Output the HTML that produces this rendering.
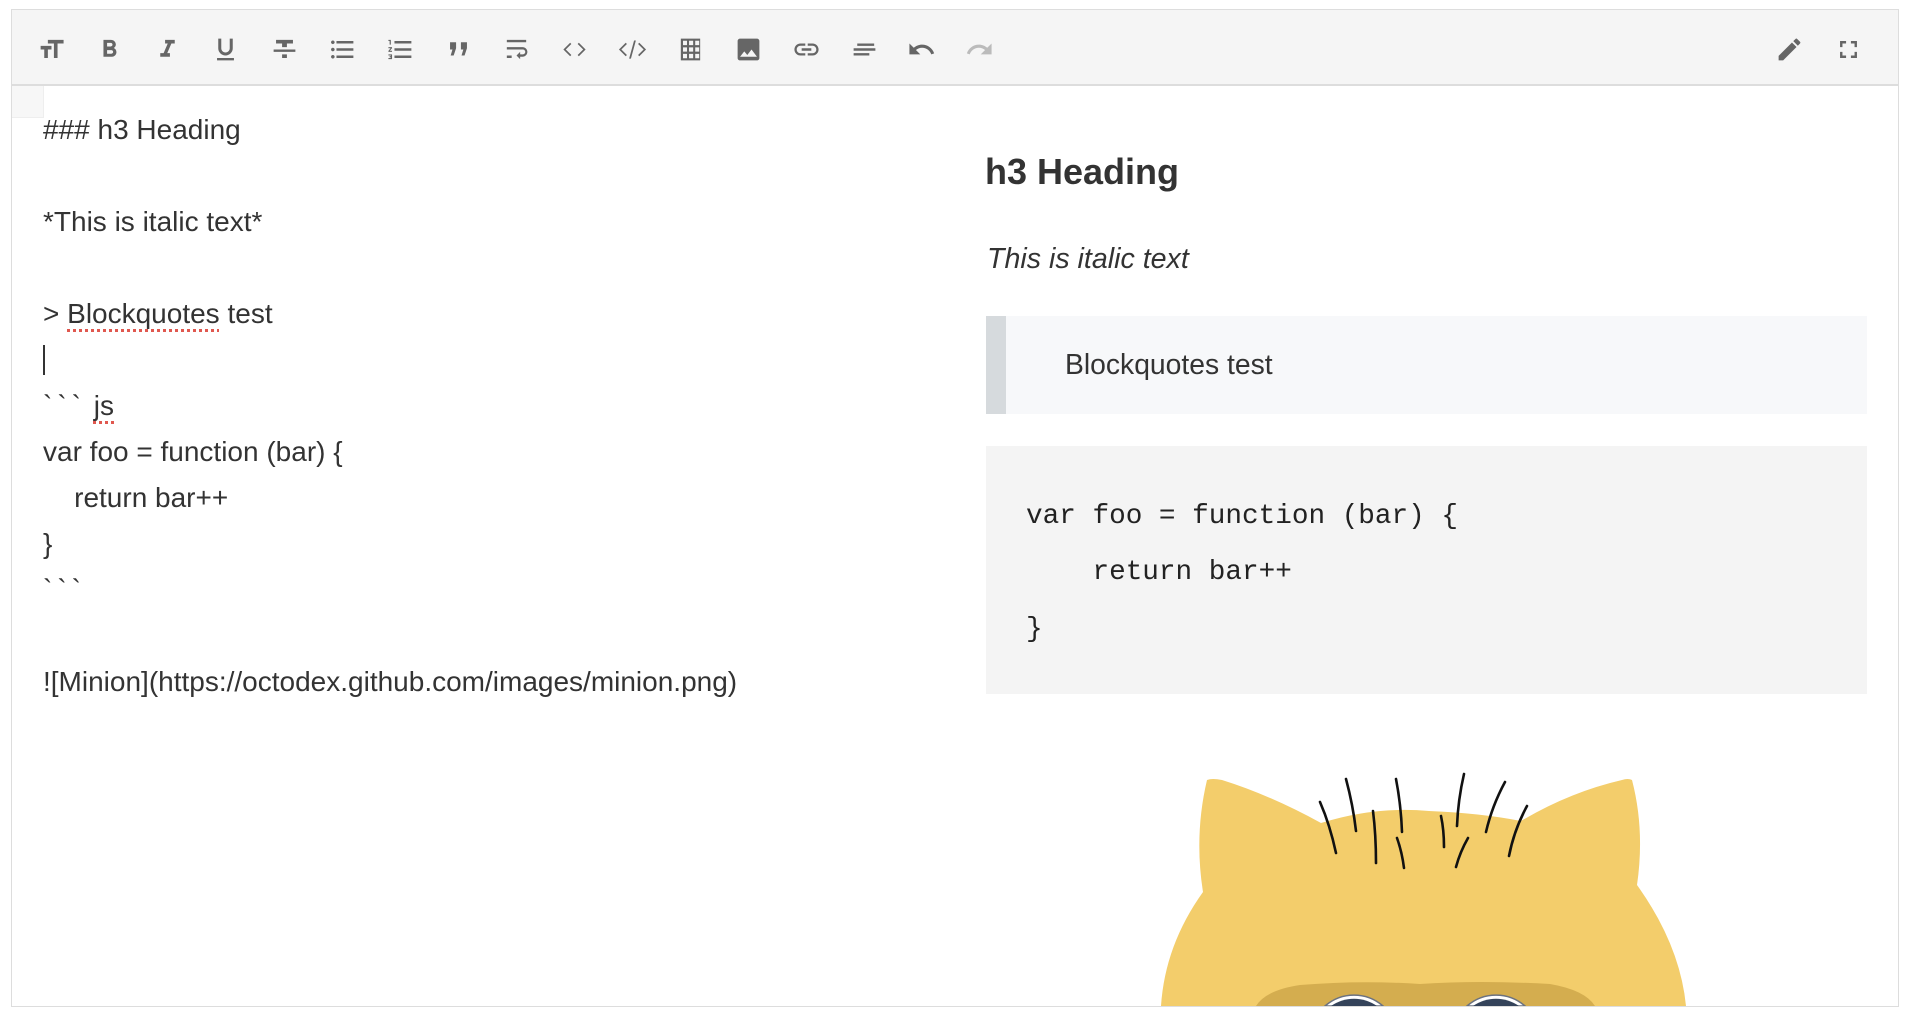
<!DOCTYPE html>
<html><head><meta charset="utf-8"><style>
html,body{margin:0;padding:0;background:#fff;width:1910px;height:1018px;overflow:hidden;position:relative;font-family:"Liberation Sans",Arial,sans-serif;color:#333}
.frame{position:absolute;left:11px;top:9px;width:1886px;height:996px;border:1px solid #ddd;box-sizing:content-box}
.tb{position:absolute;left:12px;top:10px;width:1886px;height:74px;background:#f5f5f5;border-bottom:2px solid #ddd}
.ic{position:absolute;top:35px;width:29px;height:29px}
.ic svg{width:29px;height:29px;fill:#666}
.gut{position:absolute;left:12px;top:86px;width:31px;height:31px;background:#f7f7f7;border-right:1px solid #eee;border-bottom:1px solid #eee}
.ln{position:absolute;left:43px;height:46px;line-height:46px;font-size:28px;white-space:pre;color:#333}
.bt{letter-spacing:5px}
.sp{text-decoration:underline dotted #e0584f;text-decoration-thickness:3px;text-underline-offset:6px}
.cur{position:absolute;left:43px;top:345px;width:2px;height:30px;background:#333}
h3{position:absolute;left:985px;top:148px;margin:0;font-size:36px;font-weight:bold;line-height:48px;color:#333}
.it{position:absolute;left:987px;top:236px;font-size:28.6px;font-style:italic;line-height:46px}
.bq{position:absolute;left:986px;top:316px;width:881px;height:98px;background:#f7f8fa}
.bq .bar{position:absolute;left:0;top:0;width:20px;height:98px;background:#d6dadd}
.bq .t{position:absolute;left:79px;top:25px;font-size:28.3px;line-height:46px}
.code{position:absolute;left:986px;top:446px;width:881px;height:248px;background:#f4f4f4}
.code div{position:absolute;left:40px;font-family:"Liberation Mono","Courier New",monospace;font-size:27.7px;line-height:40px;white-space:pre;color:#222}
</style></head><body>
<div class="frame"></div>
<div class="tb"></div>

<div class="ic" style="left:37px"><svg viewBox="0 0 24 24"><path d="M9 4v3h5v12h3V7h5V4H9zm-6 8h3v7h3v-7h3V9H3v3z"/></svg></div>
<div class="ic" style="left:95px"><svg viewBox="0 0 24 24"><path d="M15.6 10.79c.97-.67 1.65-1.77 1.65-2.79 0-2.26-1.75-4-4-4H7v14h7.04c2.09 0 3.71-1.7 3.71-3.79 0-1.52-.86-2.82-2.15-3.42zM10 6.5h3c.83 0 1.5.67 1.5 1.5s-.67 1.5-1.5 1.5h-3v-3zm3.5 9H10v-3h3.5c.83 0 1.5.67 1.5 1.5s-.67 1.5-1.5 1.5z"/></svg></div>
<div class="ic" style="left:153px"><svg viewBox="0 0 24 24"><path d="M10 4v3h2.21l-3.42 8H6v3h8v-3h-2.21l3.42-8H18V4z"/></svg></div>
<div class="ic" style="left:211px"><svg viewBox="0 0 24 24"><path d="M12 17c3.31 0 6-2.69 6-6V3h-2.5v8c0 1.93-1.57 3.5-3.5 3.5S8.5 12.93 8.5 11V3H6v8c0 3.31 2.69 6 6 6zm-7 2v2h14v-2H5z"/></svg></div>
<div class="ic" style="left:270px"><svg viewBox="0 0 24 24"><path d="M10 19h4v-3h-4v3zM5 4v3h5v3h4V7h5V4H5zM3 14h18v-2H3v2z"/></svg></div>
<div class="ic" style="left:328px"><svg viewBox="0 0 24 24"><path d="M4 10.5c-.83 0-1.5.67-1.5 1.5s.67 1.5 1.5 1.5 1.5-.67 1.5-1.5-.67-1.5-1.5-1.5zm0-6c-.83 0-1.5.67-1.5 1.5S3.17 7.5 4 7.5 5.5 6.83 5.5 6 4.83 4.5 4 4.5zm0 12c-.83 0-1.5.68-1.5 1.5s.68 1.5 1.5 1.5 1.5-.68 1.5-1.5-.67-1.5-1.5-1.5zM7 19h14v-2H7v2zm0-6h14v-2H7v2zm0-8v2h14V5H7z"/></svg></div>
<div class="ic" style="left:386px"><svg viewBox="0 0 24 24"><path d="M2 17h2v.5H3v1h1v.5H2v1h3v-4H2v1zm1-9h1V4H2v1h1v3zm-1 3h1.8L2 13.1v.9h3v-1H3.2L5 10.9V10H2v1zm5-6v2h14V5H7zm0 14h14v-2H7v2zm0-6h14v-2H7v2z"/></svg></div>
<div class="ic" style="left:444px"><svg viewBox="0 0 24 24"><path d="M5 6h5v5l-2 6H5.5l1.5-5H5zM14 6h5v5l-2 6h-2.5l1.5-5h-2z"/></svg></div>
<div class="ic" style="left:502px"><svg viewBox="0 0 24 24"><path d="M4 19h4v-2H4v2zM20 4H4v2h16V4zm-3 6H4v2h13.25c1.1 0 2 .9 2 2s-.9 2-2 2H15v-2l-3 3 3 3v-2h2c2.21 0 4-1.79 4-4s-1.79-4-4-4z"/></svg></div>
<div class="ic" style="left:560px"><svg viewBox="0 0 24 24"><path d="M9.4 16.6L4.8 12l4.6-4.6L8.4 6.4 2.8 12l5.6 5.6zm5.2 0l4.6-4.6-4.6-4.6 1-1 5.6 5.6-5.6 5.6z"/></svg></div>
<div class="ic" style="left:618px"><svg viewBox="0 0 24 24"><path d="M7.4 16.6L2.8 12l4.6-4.6L6.4 6.4 0.8 12l5.6 5.6zm9.2 0l4.6-4.6-4.6-4.6 1-1 5.6 5.6-5.6 5.6zM13.3 4.5h1.5L10.7 19.5H9.2z"/></svg></div>
<div class="ic" style="left:676px"><svg viewBox="0 0 24 24"><path d="M4 3h16v18H4zm1.8 1.8v3.6h3.3V4.8zm5 0v3.6h3.4V4.8zm5.1 0v3.6h3.3V4.8zM5.8 10.2v3.6h3.3v-3.6zm5 0v3.6h3.4v-3.6zm5.1 0v3.6h3.3v-3.6zM5.8 15.6v3.6h3.3v-3.6zm5 0v3.6h3.4v-3.6zm5.1 0v3.6h3.3v-3.6z" fill-rule="evenodd"/></svg></div>
<div class="ic" style="left:734px"><svg viewBox="0 0 24 24"><path d="M21 19V5c0-1.1-.9-2-2-2H5c-1.1 0-2 .9-2 2v14c0 1.1.9 2 2 2h14c1.1 0 2-.9 2-2zM8.5 13.5l2.5 3.01L14.5 12l4.5 6H5l3.5-4.5z"/></svg></div>
<div class="ic" style="left:792px"><svg viewBox="0 0 24 24"><path d="M3.9 12c0-1.71 1.39-3.1 3.1-3.1h4V7H7c-2.76 0-5 2.24-5 5s2.24 5 5 5h4v-1.9H7c-1.71 0-3.1-1.39-3.1-3.1zM8 13h8v-2H8v2zm9-6h-4v1.9h4c1.71 0 3.1 1.39 3.1 3.1s-1.39 3.1-3.1 3.1h-4V17h4c2.76 0 5-2.24 5-5s-2.24-5-5-5z"/></svg></div>
<div class="ic" style="left:850px"><svg viewBox="0 0 24 24"><path d="M6 7h14v2H6zM3 11h18v2H3zM3 15h13v2H3z"/></svg></div>
<div class="ic" style="left:907px"><svg viewBox="0 0 24 24"><path d="M12.5 8c-2.65 0-5.05.99-6.9 2.6L2 7v9h9l-3.62-3.62c1.39-1.16 3.16-1.88 5.12-1.88 3.54 0 6.55 2.31 7.6 5.5l2.37-.78C21.08 11.03 17.15 8 12.5 8z"/></svg></div>
<div class="ic" style="left:965px"><svg viewBox="0 0 24 24" style="fill:#bbb"><path d="M18.4 10.6C16.55 8.99 14.15 8 11.5 8c-4.65 0-8.58 3.03-9.96 7.22L3.9 16c1.05-3.19 4.05-5.5 7.6-5.5 1.95 0 3.73.72 5.12 1.88L13 16h9V7l-3.6 3.6z"/></svg></div>
<div class="ic" style="left:1775px"><svg viewBox="0 0 24 24"><path d="M3 17.25V21h3.75L17.81 9.94l-3.75-3.75L3 17.25zM20.71 7.04a1 1 0 000-1.41l-2.34-2.34a1 1 0 00-1.41 0l-1.83 1.83 3.75 3.75 1.83-1.83z"/></svg></div>
<div class="ic" style="left:1834px"><svg viewBox="0 0 24 24"><path d="M7 14H5v5h5v-2H7v-3zm-2-4h2V7h3V5H5v5zm12 7h-3v2h5v-5h-2v3zM14 5v2h3v3h2V5h-5z"/></svg></div>

<div class="gut"></div>
<div class="ln" style="top:107px">### h3 Heading</div>
<div class="ln" style="top:199px">*This is italic text*</div>
<div class="ln" style="top:291px">&gt; <span class="sp">Blockquotes</span> test</div>
<div class="cur"></div>
<div class="ln" style="top:383px"><span class="bt">&#96;&#96;&#96;</span> <span class="sp">js</span></div>
<div class="ln" style="top:429px">var foo = function (bar) {</div>
<div class="ln" style="top:475px">    return bar++</div>
<div class="ln" style="top:521px">}</div>
<div class="ln" style="top:567px"><span class="bt">&#96;&#96;&#96;</span></div>
<div class="ln" style="top:659px">![Minion](https://octodex.github.com/images/minion.png)</div>

<h3>h3 Heading</h3>
<div class="it">This is italic text</div>
<div class="bq"><div class="bar"></div><div class="t">Blockquotes test</div></div>
<div class="code">
<div style="top:51px">var foo = function (bar) {</div>
<div style="top:107px">    return bar++</div>
<div style="top:164px">}</div>
</div>

<svg style="position:absolute;left:0;top:0" width="1910" height="1006" viewBox="0 0 1910 1006">
<path d="M1207 780 Q1212 778 1222 780 Q1270 795 1321 823 Q1375 806 1429 811 Q1480 813 1521 821 Q1570 792 1622 780 Q1628 778 1632 780 Q1645 830 1637 885 Q1680 945 1686 1006 L1161 1006 Q1165 945 1203 892 Q1194 835 1207 780 Z" fill="#f3cd6b"/>
<path d="M1256 1006 Q1266 990 1300 985 Q1360 980 1420 984 Q1480 980 1550 984 Q1585 990 1595 1006 Z" fill="#d4ad4f"/>
<path d="M1325 1006 A44 44 0 0 1 1383 1006 Z" fill="#fff" stroke="#6b7280" stroke-width="1.5"/>
<path d="M1331 1006 A40 40 0 0 1 1377 1006 Z" fill="#34435a"/>
<path d="M1467 1006 A44 44 0 0 1 1525 1006 Z" fill="#fff" stroke="#6b7280" stroke-width="1.5"/>
<path d="M1473 1006 A40 40 0 0 1 1519 1006 Z" fill="#34435a"/>
<g stroke="#111" stroke-width="2.6" stroke-linecap="round" fill="none">
<path d="M1320 802 Q1330 825 1336 853"/>
<path d="M1346 779 Q1353 805 1356 831"/>
<path d="M1373 811 Q1376 835 1376 863"/>
<path d="M1396 779 Q1401 805 1402 832"/>
<path d="M1397 838 Q1402 852 1404 868"/>
<path d="M1441 816 Q1444 830 1444 847"/>
<path d="M1464 774 Q1458 800 1457 826"/>
<path d="M1468 838 Q1460 852 1456 867"/>
<path d="M1505 782 Q1492 806 1486 832"/>
<path d="M1527 806 Q1514 830 1509 856"/>
</g>
</svg>
</body></html>
